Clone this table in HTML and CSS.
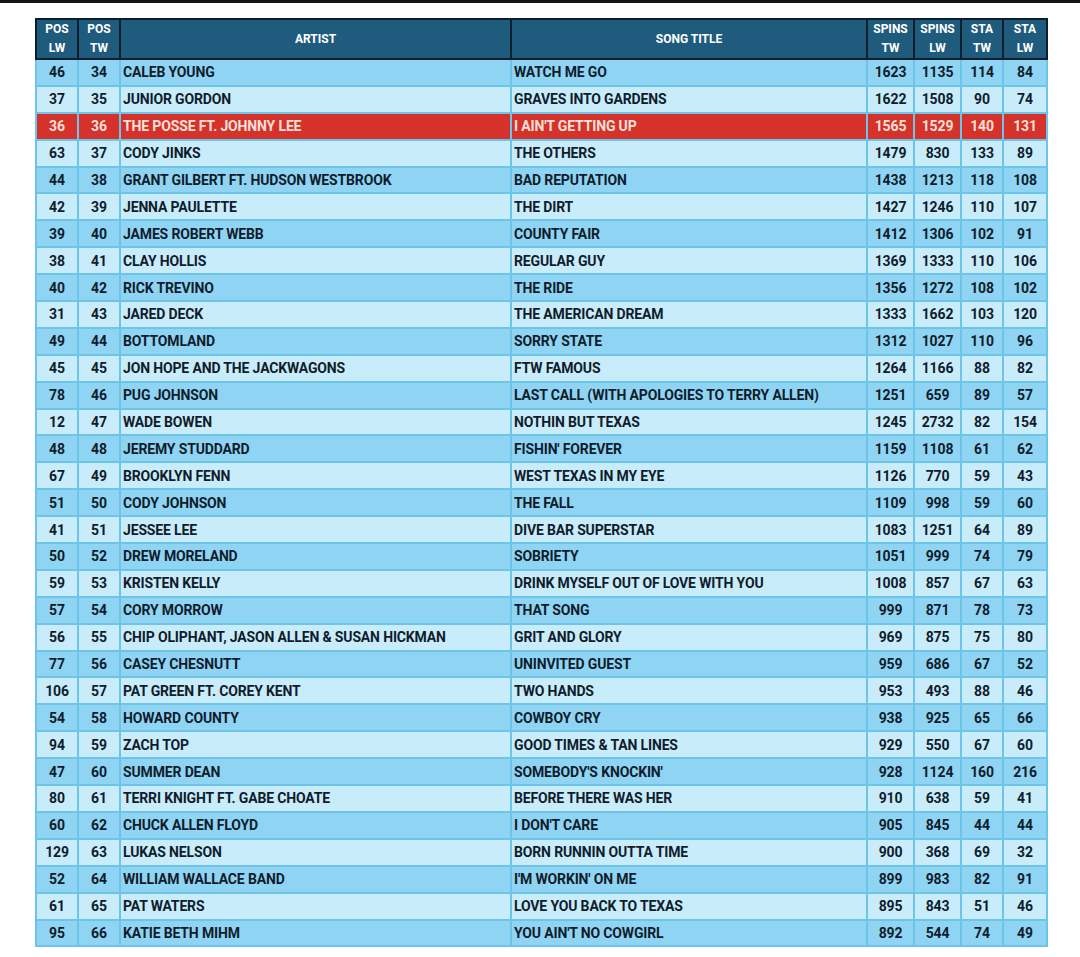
FILE: index.html
```html
<!DOCTYPE html>
<html>
<head>
<meta charset="utf-8">
<link rel="stylesheet" href="styles.css">
</head>
<body>
<div class="topbar"></div>
<div class="wrap">
<table class="chart">
<colgroup>
<col class="c-pos"><col class="c-pos"><col class="c-artist"><col class="c-song"><col class="c-spins"><col class="c-spins"><col class="c-sta"><col class="c-sta2">
</colgroup>
<thead>
<tr><th>POS<br>LW</th><th>POS<br>TW</th><th>ARTIST</th><th>SONG TITLE</th><th>SPINS<br>TW</th><th>SPINS<br>LW</th><th>STA<br>TW</th><th>STA<br>LW</th></tr>
</thead>
<tbody>
<tr class="d"><td>46</td><td>34</td><td class="t">CALEB YOUNG</td><td class="t">WATCH ME GO</td><td>1623</td><td>1135</td><td>114</td><td>84</td></tr>
<tr class="l"><td>37</td><td>35</td><td class="t">JUNIOR GORDON</td><td class="t">GRAVES INTO GARDENS</td><td>1622</td><td>1508</td><td>90</td><td>74</td></tr>
<tr class="r"><td>36</td><td>36</td><td class="t">THE POSSE FT. JOHNNY LEE</td><td class="t">I AIN'T GETTING UP</td><td>1565</td><td>1529</td><td>140</td><td>131</td></tr>
<tr class="l"><td>63</td><td>37</td><td class="t">CODY JINKS</td><td class="t">THE OTHERS</td><td>1479</td><td>830</td><td>133</td><td>89</td></tr>
<tr class="d"><td>44</td><td>38</td><td class="t">GRANT GILBERT FT. HUDSON WESTBROOK</td><td class="t">BAD REPUTATION</td><td>1438</td><td>1213</td><td>118</td><td>108</td></tr>
<tr class="l"><td>42</td><td>39</td><td class="t">JENNA PAULETTE</td><td class="t">THE DIRT</td><td>1427</td><td>1246</td><td>110</td><td>107</td></tr>
<tr class="d"><td>39</td><td>40</td><td class="t">JAMES ROBERT WEBB</td><td class="t">COUNTY FAIR</td><td>1412</td><td>1306</td><td>102</td><td>91</td></tr>
<tr class="l"><td>38</td><td>41</td><td class="t">CLAY HOLLIS</td><td class="t">REGULAR GUY</td><td>1369</td><td>1333</td><td>110</td><td>106</td></tr>
<tr class="d"><td>40</td><td>42</td><td class="t">RICK TREVINO</td><td class="t">THE RIDE</td><td>1356</td><td>1272</td><td>108</td><td>102</td></tr>
<tr class="l"><td>31</td><td>43</td><td class="t">JARED DECK</td><td class="t">THE AMERICAN DREAM</td><td>1333</td><td>1662</td><td>103</td><td>120</td></tr>
<tr class="d"><td>49</td><td>44</td><td class="t">BOTTOMLAND</td><td class="t">SORRY STATE</td><td>1312</td><td>1027</td><td>110</td><td>96</td></tr>
<tr class="l"><td>45</td><td>45</td><td class="t">JON HOPE AND THE JACKWAGONS</td><td class="t">FTW FAMOUS</td><td>1264</td><td>1166</td><td>88</td><td>82</td></tr>
<tr class="d"><td>78</td><td>46</td><td class="t">PUG JOHNSON</td><td class="t">LAST CALL (WITH APOLOGIES TO TERRY ALLEN)</td><td>1251</td><td>659</td><td>89</td><td>57</td></tr>
<tr class="l"><td>12</td><td>47</td><td class="t">WADE BOWEN</td><td class="t">NOTHIN BUT TEXAS</td><td>1245</td><td>2732</td><td>82</td><td>154</td></tr>
<tr class="d"><td>48</td><td>48</td><td class="t">JEREMY STUDDARD</td><td class="t">FISHIN' FOREVER</td><td>1159</td><td>1108</td><td>61</td><td>62</td></tr>
<tr class="l"><td>67</td><td>49</td><td class="t">BROOKLYN FENN</td><td class="t">WEST TEXAS IN MY EYE</td><td>1126</td><td>770</td><td>59</td><td>43</td></tr>
<tr class="d"><td>51</td><td>50</td><td class="t">CODY JOHNSON</td><td class="t">THE FALL</td><td>1109</td><td>998</td><td>59</td><td>60</td></tr>
<tr class="l"><td>41</td><td>51</td><td class="t">JESSEE LEE</td><td class="t">DIVE BAR SUPERSTAR</td><td>1083</td><td>1251</td><td>64</td><td>89</td></tr>
<tr class="d"><td>50</td><td>52</td><td class="t">DREW MORELAND</td><td class="t">SOBRIETY</td><td>1051</td><td>999</td><td>74</td><td>79</td></tr>
<tr class="l"><td>59</td><td>53</td><td class="t">KRISTEN KELLY</td><td class="t">DRINK MYSELF OUT OF LOVE WITH YOU</td><td>1008</td><td>857</td><td>67</td><td>63</td></tr>
<tr class="d"><td>57</td><td>54</td><td class="t">CORY MORROW</td><td class="t">THAT SONG</td><td>999</td><td>871</td><td>78</td><td>73</td></tr>
<tr class="l"><td>56</td><td>55</td><td class="t">CHIP OLIPHANT, JASON ALLEN &amp; SUSAN HICKMAN</td><td class="t">GRIT AND GLORY</td><td>969</td><td>875</td><td>75</td><td>80</td></tr>
<tr class="d"><td>77</td><td>56</td><td class="t">CASEY CHESNUTT</td><td class="t">UNINVITED GUEST</td><td>959</td><td>686</td><td>67</td><td>52</td></tr>
<tr class="l"><td>106</td><td>57</td><td class="t">PAT GREEN FT. COREY KENT</td><td class="t">TWO HANDS</td><td>953</td><td>493</td><td>88</td><td>46</td></tr>
<tr class="d"><td>54</td><td>58</td><td class="t">HOWARD COUNTY</td><td class="t">COWBOY CRY</td><td>938</td><td>925</td><td>65</td><td>66</td></tr>
<tr class="l"><td>94</td><td>59</td><td class="t">ZACH TOP</td><td class="t">GOOD TIMES &amp; TAN LINES</td><td>929</td><td>550</td><td>67</td><td>60</td></tr>
<tr class="d"><td>47</td><td>60</td><td class="t">SUMMER DEAN</td><td class="t">SOMEBODY'S KNOCKIN'</td><td>928</td><td>1124</td><td>160</td><td>216</td></tr>
<tr class="l"><td>80</td><td>61</td><td class="t">TERRI KNIGHT FT. GABE CHOATE</td><td class="t">BEFORE THERE WAS HER</td><td>910</td><td>638</td><td>59</td><td>41</td></tr>
<tr class="d"><td>60</td><td>62</td><td class="t">CHUCK ALLEN FLOYD</td><td class="t">I DON'T CARE</td><td>905</td><td>845</td><td>44</td><td>44</td></tr>
<tr class="l"><td>129</td><td>63</td><td class="t">LUKAS NELSON</td><td class="t">BORN RUNNIN OUTTA TIME</td><td>900</td><td>368</td><td>69</td><td>32</td></tr>
<tr class="d"><td>52</td><td>64</td><td class="t">WILLIAM WALLACE BAND</td><td class="t">I'M WORKIN' ON ME</td><td>899</td><td>983</td><td>82</td><td>91</td></tr>
<tr class="l"><td>61</td><td>65</td><td class="t">PAT WATERS</td><td class="t">LOVE YOU BACK TO TEXAS</td><td>895</td><td>843</td><td>51</td><td>46</td></tr>
<tr class="d"><td>95</td><td>66</td><td class="t">KATIE BETH MIHM</td><td class="t">YOU AIN'T NO COWGIRL</td><td>892</td><td>544</td><td>74</td><td>49</td></tr>
</tbody>
</table>
</div>
</body>
</html>
```
FILE: styles.css
```css
html, body {
  margin: 0;
  padding: 0;
  background: #ffffff;
}
body {
  font-family: "Roboto", "Liberation Sans", sans-serif;
  width: 1080px;
  height: 957px;
  overflow: hidden;
}
.topbar {
  height: 3px;
  background: #141414;
}
.wrap {
  padding: 15px 0 0 35px;
}
.chart {
  border-collapse: collapse;
  table-layout: fixed;
  width: 1011px;
}
.c-pos { width: 42px; }
.c-artist { width: 391px; }
.c-song { width: 356px; }
.c-spins { width: 47px; }
.c-sta { width: 42px; }
.c-sta2 { width: 44px; }
.chart th {
  background: #1f5b7d;
  color: #ffffff;
  font-size: 12px;
  font-weight: 700;
  line-height: 19px;
  height: 38px;
  padding: 0;
  text-align: center;
  border: 2px solid #0c1d2b;
}
.chart td {
  height: 24.9px;
  padding: 0;
  border: 2px solid #6cc4e8;
  font-size: 14px;
  font-weight: 700;
  letter-spacing: -0.15px;
  color: #101c2c;
  text-align: center;
  white-space: nowrap;
  overflow: hidden;
}
.chart td.t {
  text-align: left;
  padding-left: 2px;
}
.chart tr.d td { background: #8fd5f3; }
.chart tr.l td { background: #c9ecfa; }
.chart tr.r td {
  background: #d5322b;
  color: #fbe1d9;
}
```
